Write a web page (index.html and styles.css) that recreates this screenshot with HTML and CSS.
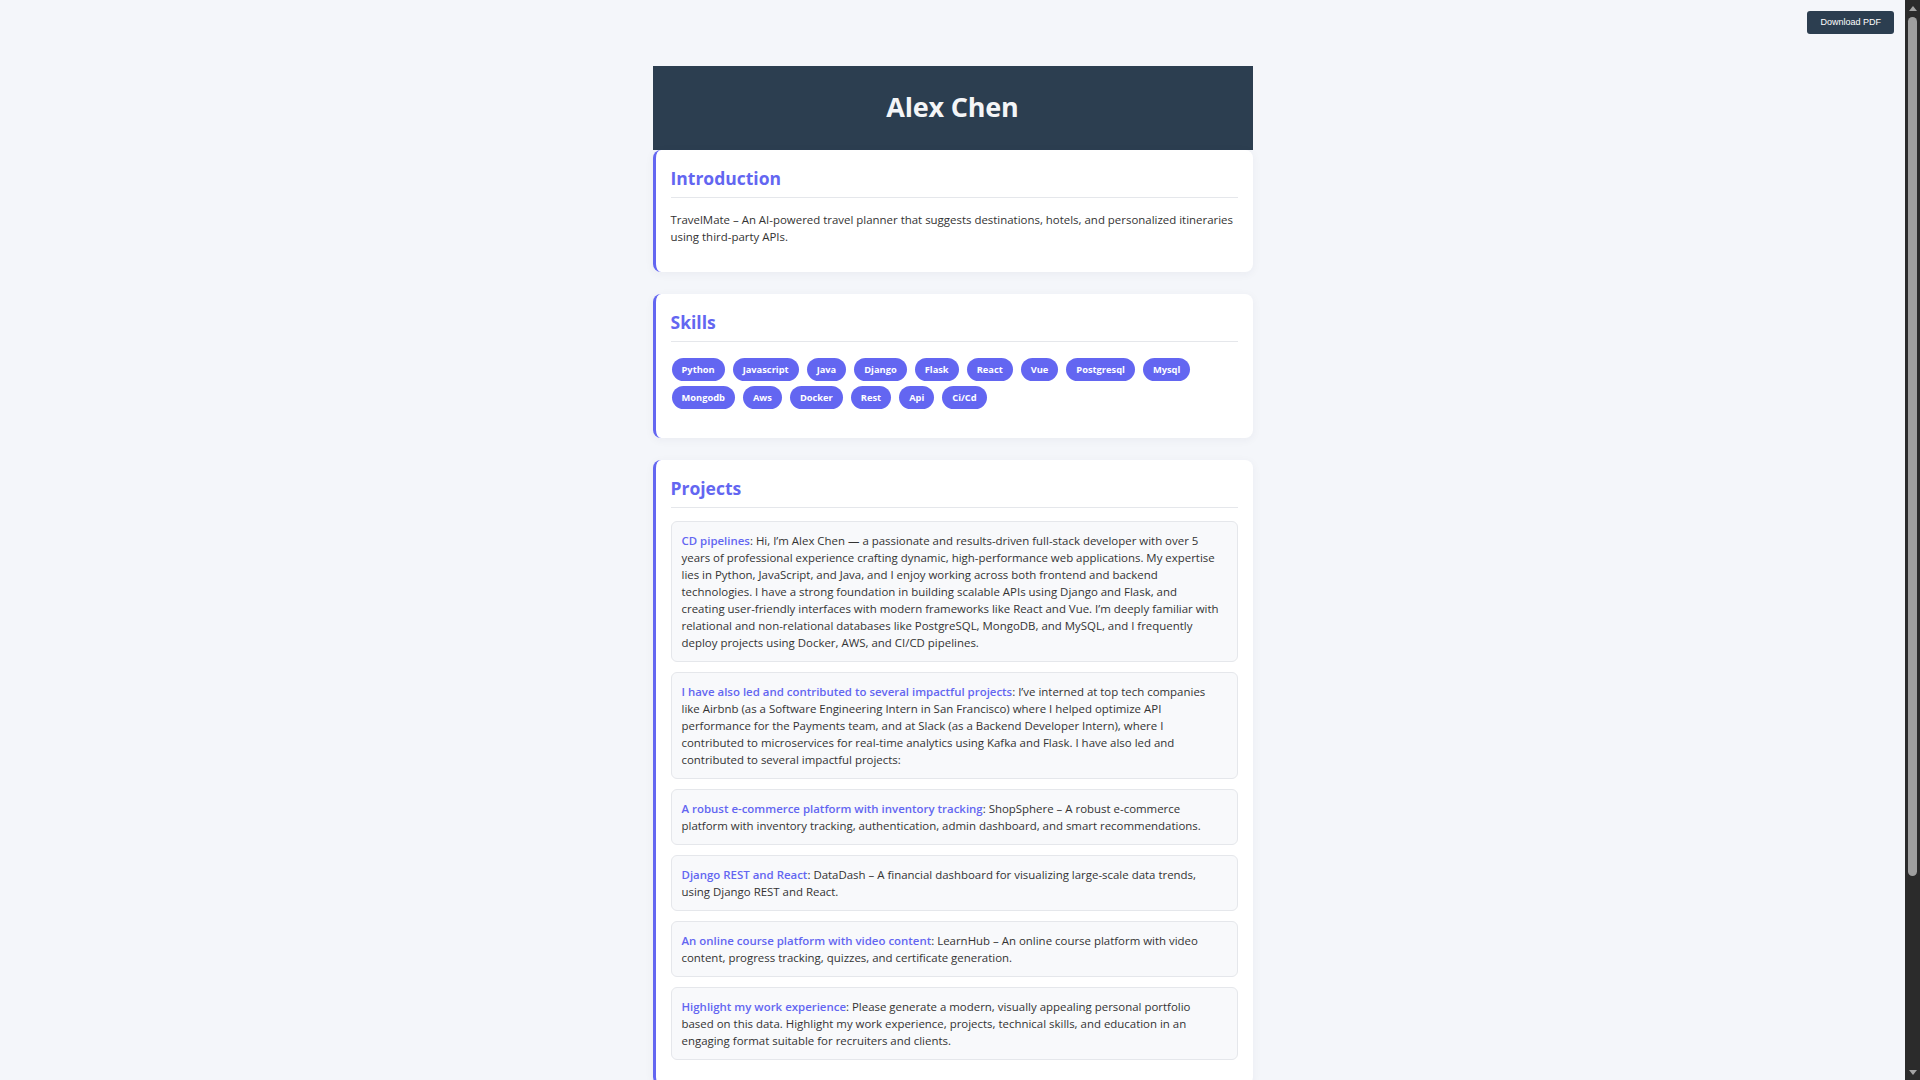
FILE: index.html
```html
<!DOCTYPE html>
<html lang="en">
<head>
<meta charset="utf-8">
<title>Alex Chen – Resume</title>
<link rel="stylesheet" href="styles.css">
</head>
<body>
<button class="download-btn" type="button">Download PDF</button>
<div class="scrollbar" aria-hidden="true">
  <span class="scroll-arrow scroll-arrow-up"></span>
  <span class="scroll-thumb"></span>
  <span class="scroll-arrow scroll-arrow-down"></span>
</div>
<div class="page">
  <main class="resume">
    <header class="resume-header">
      <h1 class="resume-name">Alex Chen</h1>
    </header>

    <section class="card">
      <h2 class="card-title">Introduction</h2>
      <p class="card-text">TravelMate – An AI-powered travel planner that suggests destinations, hotels, and personalized itineraries<br>using third-party APIs.</p>
    </section>

    <section class="card">
      <h2 class="card-title">Skills</h2>
      <div class="tags">
        <span class="tag">Python</span>
        <span class="tag">Javascript</span>
        <span class="tag">Java</span>
        <span class="tag">Django</span>
        <span class="tag">Flask</span>
        <span class="tag">React</span>
        <span class="tag">Vue</span>
        <span class="tag">Postgresql</span>
        <span class="tag">Mysql</span>
        <span class="tag">Mongodb</span>
        <span class="tag">Aws</span>
        <span class="tag">Docker</span>
        <span class="tag">Rest</span>
        <span class="tag">Api</span>
        <span class="tag">Ci/Cd</span>
      </div>
    </section>

    <section class="card">
      <h2 class="card-title">Projects</h2>
      <div class="project">
        <p class="project-text"><strong class="project-label">CD pipelines</strong>: Hi, I’m Alex Chen — a passionate and results-driven full-stack developer with over 5<br>years of professional experience crafting dynamic, high-performance web applications. My expertise<br>lies in Python, JavaScript, and Java, and I enjoy working across both frontend and backend<br>technologies. I have a strong foundation in building scalable APIs using Django and Flask, and<br>creating user-friendly interfaces with modern frameworks like React and Vue. I’m deeply familiar with<br>relational and non-relational databases like PostgreSQL, MongoDB, and MySQL, and I frequently<br>deploy projects using Docker, AWS, and CI/CD pipelines.</p>
      </div>
      <div class="project">
        <p class="project-text"><strong class="project-label">I have also led and contributed to several impactful projects</strong>: I’ve interned at top tech companies<br>like Airbnb (as a Software Engineering Intern in San Francisco) where I helped optimize API<br>performance for the Payments team, and at Slack (as a Backend Developer Intern), where I<br>contributed to microservices for real-time analytics using Kafka and Flask. I have also led and<br>contributed to several impactful projects:</p>
      </div>
      <div class="project">
        <p class="project-text"><strong class="project-label">A robust e-commerce platform with inventory tracking</strong>: ShopSphere – A robust e-commerce<br>platform with inventory tracking, authentication, admin dashboard, and smart recommendations.</p>
      </div>
      <div class="project">
        <p class="project-text"><strong class="project-label">Django REST and React</strong>: DataDash – A financial dashboard for visualizing large-scale data trends,<br>using Django REST and React.</p>
      </div>
      <div class="project">
        <p class="project-text"><strong class="project-label">An online course platform with video content</strong>: LearnHub – An online course platform with video<br>content, progress tracking, quizzes, and certificate generation.</p>
      </div>
      <div class="project">
        <p class="project-text"><strong class="project-label">Highlight my work experience</strong>: Please generate a modern, visually appealing personal portfolio<br>based on this data. Highlight my work experience, projects, technical skills, and education in an<br>engaging format suitable for recruiters and clients.</p>
      </div>
    </section>
  </main>
</div>
</body>
</html>
```
FILE: styles.css
```css
* {
  box-sizing: border-box;
}

html,
body {
  margin: 0;
  padding: 0;
}

body {
  background: #f4f6fa;
  color: #333333;
  font-family: "Open Sans", "Noto Sans", sans-serif;
  font-size: 11.45px;
  line-height: 17px;
}

.download-btn {
  position: fixed;
  top: 11px;
  right: 26px;
  z-index: 10;
  height: 23px;
  padding: 0 13px;
  border: none;
  border-radius: 3px;
  background: #2c3e50;
  color: #ffffff;
  font-family: "Liberation Sans", Arial, sans-serif;
  font-size: 9px;
  line-height: 23px;
  cursor: pointer;
}

/* imitation of the dark browser scrollbar on the right edge */
.scrollbar {
  position: fixed;
  top: 0;
  right: 0;
  bottom: 0;
  z-index: 20;
  display: flex;
  flex-direction: column;
  align-items: center;
  width: 15px;
  background: #2b2b2b;
}

.scroll-arrow {
  flex: none;
  width: 0;
  height: 0;
  border-left: 4px solid transparent;
  border-right: 4px solid transparent;
}

.scroll-arrow-up {
  margin-top: 6px;
  border-bottom: 5px solid #a3a3a3;
}

.scroll-arrow-down {
  margin-top: auto;
  margin-bottom: 5px;
  border-top: 5px solid #a3a3a3;
}

.scroll-thumb {
  flex: none;
  width: 9px;
  height: 859px;
  margin-top: 6px;
  border-radius: 5px;
  background: #9f9f9f;
}

.page {
  margin-right: 15px;
  padding: 66px 0 203px;
}

.resume {
  width: 600px;
  margin: 0 auto;
}

.resume-header {
  display: flex;
  align-items: center;
  justify-content: center;
  height: 84px;
  padding-bottom: 2px;
  background: #2c3e50;
}

.resume-name {
  margin: 0;
  color: #f4f5f7;
  font-size: 27px;
  font-weight: 700;
  line-height: 36px;
  letter-spacing: -0.2px;
}

.card {
  margin-bottom: 22px;
  padding: 15px;
  background: #ffffff;
  border-left: 3px solid #6366f1;
  border-radius: 8px;
  box-shadow: 0 2px 10px rgba(30, 40, 80, 0.05);
}

.card-title {
  margin: 0 0 13px;
  padding-top: 1px;
  padding-bottom: 7px;
  border-bottom: 1px solid #e5e7eb;
  color: #6366f1;
  font-size: 17.5px;
  font-weight: 700;
  line-height: 24px;
}

.card-text {
  margin: 0 0 12px;
}

.tags {
  display: flex;
  flex-wrap: wrap;
  gap: 5px 8px;
  padding: 3px 0 0 1px;
  margin-bottom: 14px;
}

.tag {
  display: inline-block;
  padding: 4px 10px;
  border-radius: 999px;
  background: #6366f1;
  color: #ffffff;
  font-size: 9.3px;
  font-weight: 700;
  line-height: 15px;
}

.project {
  margin-bottom: 10px;
  padding: 10px;
  background: #f8f9fb;
  border: 1px solid #e5e7eb;
  border-radius: 6px;
}

.project-text {
  margin: 0;
}

.project-label {
  color: #6366f1;
  font-weight: 600;
}
```
